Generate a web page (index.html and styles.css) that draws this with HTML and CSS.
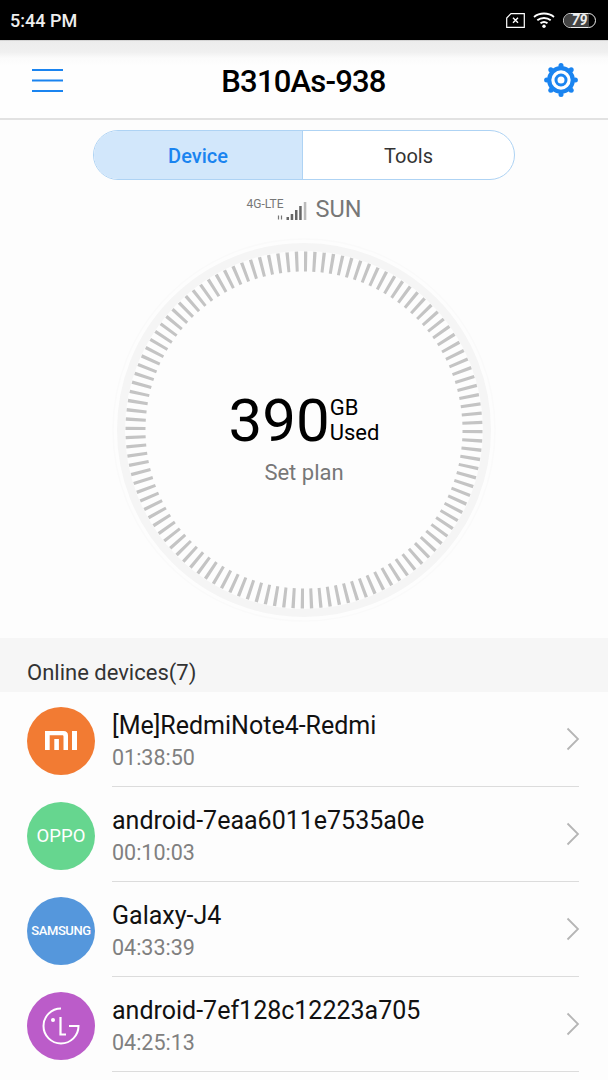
FILE: index.html
```html
<!DOCTYPE html>
<html lang="en">
<head>
    <meta charset="UTF-8">
    <meta name="viewport" content="width=device-width, initial-scale=1.0">
    <title>B310As-938</title>
    <link rel="stylesheet" href="styles.css">
</head>
<body>
    <div class="status-bar">
        <span class="clock">5:44 PM</span>
        <div class="status-icons">
            <svg class="sim-icon" width="19" height="15" viewBox="0 0 19 15">
                <path d="M5 .7H18.300V14.300H.7V5Z" fill="none" stroke="#fff" stroke-width="1.200"/>
                <path d="M7 4.800L12 9.800M12 4.800L7 9.800" stroke="#fff" stroke-width="1.400"/>
            </svg>
            <svg class="wifi-icon" width="22" height="16" viewBox="0 0 22 16">
                <path d="M1 5C6.500 .3 15.500 .3 21 5M4.300 8.300C8 5.200 14 5.200 17.700 8.300M7.500 11.300C9.500 9.800 12.500 9.800 14.500 11.300" fill="none" stroke="#fff" stroke-width="1.800"/>
                <circle cx="11" cy="14.300" r="1.700" fill="#fff"/>
            </svg>
            <div class="battery">
                <div class="battery-fill"></div>
                <span class="battery-num">79</span>
            </div>
        </div>
    </div>

    <header class="top-bar">
        <svg class="menu-icon" width="31" height="24" viewBox="0 0 31 24">
            <path d="M0 2H31M0 12.500H31M0 23H31" stroke="#1a84f0" stroke-width="2.200"/>
        </svg>
        <h1>B310As-938</h1>
        <svg class="gear-icon" width="34" height="34" viewBox="0 0 34 34">
            <circle cx="17" cy="17" r="11.800" fill="none" stroke="#1a84f0" stroke-width="4.200"/>
            <circle cx="17" cy="17" r="5" fill="none" stroke="#1a84f0" stroke-width="3"/>
            <g fill="#1a84f0">
                <circle cx="17" cy="2.600" r="2.500"/>
                <circle cx="17" cy="31.400" r="2.500"/>
                <circle cx="2.600" cy="17" r="2.500"/>
                <circle cx="31.400" cy="17" r="2.500"/>
                <circle cx="6.800" cy="6.800" r="2.500"/>
                <circle cx="27.200" cy="6.800" r="2.500"/>
                <circle cx="6.800" cy="27.200" r="2.500"/>
                <circle cx="27.200" cy="27.200" r="2.500"/>
            </g>
        </svg>
    </header>

    <div class="tabs">
        <div class="tab tab-active">Device</div>
        <div class="tab">Tools</div>
    </div>

    <div class="network">
        <div class="signal">
            <span class="net-type">4G-LTE</span>
            <svg class="signal-bars" width="37" height="18" viewBox="0 0 37 18">
                <path d="M8.500 17.500V13.500M11.500 13.500V17.500" stroke="#777" stroke-width="1.200"/>
                <rect x="16.500" y="15" width="2.500" height="3" fill="#666"/>
                <rect x="20.700" y="12" width="2.500" height="6" fill="#666"/>
                <rect x="25" y="8" width="2.500" height="10" fill="#666"/>
                <rect x="29.200" y="4" width="2.500" height="14" fill="#666"/>
                <rect x="33.800" y="0" width="2.500" height="18" fill="#bbb"/>
            </svg>
        </div>
        <span class="carrier">SUN</span>
    </div>

    <div class="gauge">
        <svg class="gauge-ring" width="400" height="400" viewBox="0 0 400 400">
            <circle cx="200" cy="200" r="191" fill="none" stroke="#fafafa" stroke-width="1.500"/>
            <circle cx="200" cy="200" r="183" fill="none" stroke="#f5f5f5" stroke-width="8"/>
            <circle cx="200" cy="200" r="168.500" fill="none" stroke="#c4c4c4" stroke-width="20" pathLength="120" stroke-dasharray="0.36 0.64"/>
        </svg>
        <div class="gauge-text">
            <div class="usage">
                <span class="usage-num">390</span>
                <span class="usage-unit">GB<br>Used</span>
            </div>
            <div class="set-plan">Set plan</div>
        </div>
    </div>

    <div class="list-title">Online devices(7)</div>

    <div class="device-list">
        <div class="device">
            <div class="avatar avatar-mi">
                <svg width="32" height="19" viewBox="0 0 32 19">
                    <path d="M0 0H18.500C21.500 0 23 1.500 23 4.500V19H18.500V5.500C18.500 4.800 18 4.300 17.500 4.300H4.700V19H0ZM9.300 8H13.900V19H9.300ZM27 0H32V19H27Z" fill="#fff"/>
                </svg>
            </div>
            <div class="device-info">
                <div class="device-name">[Me]RedmiNote4-Redmi</div>
                <div class="device-time">01:38:50</div>
            </div>
            <svg class="chevron" width="14" height="24" viewBox="0 0 14 24"><path d="M1.500 1.500L12 12L1.500 22.500" fill="none" stroke="#b5b5b5" stroke-width="1.800"/></svg>
        </div>
        <div class="device">
            <div class="avatar avatar-oppo"><span class="brand-oppo">OPPO</span></div>
            <div class="device-info">
                <div class="device-name">android-7eaa6011e7535a0e</div>
                <div class="device-time">00:10:03</div>
            </div>
            <svg class="chevron" width="14" height="24" viewBox="0 0 14 24"><path d="M1.500 1.500L12 12L1.500 22.500" fill="none" stroke="#b5b5b5" stroke-width="1.800"/></svg>
        </div>
        <div class="device">
            <div class="avatar avatar-samsung"><span class="brand-samsung">SAMSUNG</span></div>
            <div class="device-info">
                <div class="device-name">Galaxy-J4</div>
                <div class="device-time">04:33:39</div>
            </div>
            <svg class="chevron" width="14" height="24" viewBox="0 0 14 24"><path d="M1.500 1.500L12 12L1.500 22.500" fill="none" stroke="#b5b5b5" stroke-width="1.800"/></svg>
        </div>
        <div class="device">
            <div class="avatar avatar-lg">
                <svg width="38" height="38" viewBox="0 0 38 38">
                    <path d="M19 1.500A17.500 17.500 0 1 0 36.500 19H27" fill="none" stroke="#fff" stroke-width="2"/>
                    <path d="M18.500 10V27.500H24" fill="none" stroke="#fff" stroke-width="2.200"/>
                    <circle cx="11" cy="13" r="2" fill="#fff"/>
                </svg>
            </div>
            <div class="device-info">
                <div class="device-name">android-7ef128c12223a705</div>
                <div class="device-time">04:25:13</div>
            </div>
            <svg class="chevron" width="14" height="24" viewBox="0 0 14 24"><path d="M1.500 1.500L12 12L1.500 22.500" fill="none" stroke="#b5b5b5" stroke-width="1.800"/></svg>
        </div>
    </div>
</body>
</html>
```

FILE: styles.css
```css
html, body {
    margin: 0;
    padding: 0;
}
body {
    width: 608px;
    height: 1080px;
    overflow: hidden;
    background-color: #fdfdfd;
    font-family: Roboto, "Liberation Sans", sans-serif;
    color: #111;
}
.status-bar {
    height: 40px;
    background: #000;
    color: #eee;
    display: flex;
    justify-content: space-between;
    align-items: center;
    padding: 0 12px 0 10px;
}
.clock {
    font-size: 18px;
    font-weight: 500;
}
.status-icons {
    display: flex;
    align-items: center;
    gap: 8px;
}
.battery {
    position: relative;
    width: 31px;
    height: 13px;
    border: 1.5px solid #eee;
    border-radius: 9px;
    overflow: hidden;
}
.battery-fill {
    height: 100%;
    width: 80%;
    background: #444;
}
.battery-num {
    position: absolute;
    left: 0;
    right: 0;
    top: -2px;
    text-align: center;
    font-size: 14px;
    font-weight: 700;
    font-style: italic;
    color: #eee;
}
.top-bar {
    height: 80px;
    padding: 2px 30px 0 32px;
    box-sizing: border-box;
    display: flex;
    justify-content: space-between;
    align-items: center;
    background: linear-gradient(#bbb, #ececec 1px, #f0f0f0 12px, #fbfbfb 18px, #fefefe 26px);
    border-bottom: 2px solid #e2e2e2;
}
.top-bar h1 {
    margin: 3px 0 0;
    font-size: 31px;
    font-weight: 500;
    letter-spacing: -0.8px;
    color: #000;
}
.tabs {
    display: flex;
    width: 422px;
    height: 50px;
    margin: 10px auto 0;
    box-sizing: border-box;
    border: 1.5px solid #aed3f4;
    border-radius: 25px;
    overflow: hidden;
    background: #fff;
}
.tab {
    flex: 1;
    display: flex;
    align-items: center;
    justify-content: center;
    padding-top: 1px;
    font-size: 20px;
    color: #333;
}
.tab-active {
    flex: 0 0 209px;
    box-sizing: border-box;
    background: #d2e7fb;
    color: #1a84f0;
    font-weight: 500;
    border-right: 1.5px solid #aed3f4;
}
.network {
    display: flex;
    justify-content: center;
    align-items: flex-end;
    height: 28px;
    margin-top: 15px;
    gap: 9px;
}
.signal {
    position: relative;
    width: 60px;
    height: 26px;
}
.net-type {
    position: absolute;
    left: 0;
    top: 0;
    font-size: 12px;
    color: #777;
}
.signal-bars {
    position: absolute;
    right: 0;
    bottom: 3px;
}
.carrier {
    font-size: 23.500px;
    color: #777;
    line-height: 28px;
}
.gauge {
    position: relative;
    height: 410px;
    margin-top: 5px;
    display: flex;
    justify-content: center;
    align-items: center;
}
.gauge-ring {
    position: absolute;
    left: 104px;
    top: 2px;
}
.gauge-text {
    position: relative;
    margin-top: 5px;
    display: flex;
    flex-direction: column;
    align-items: center;
}
.usage {
    display: flex;
    align-items: center;
    color: #000;
}
.usage-num {
    font-size: 60px;
    line-height: 70px;
}
.usage-unit {
    font-size: 22px;
    line-height: 25px;
    margin-bottom: 2px;
}
.set-plan {
    font-size: 22px;
    color: #777;
    margin-top: 4px;
}
.list-title {
    height: 54px;
    padding-left: 27px;
    display: flex;
    align-items: flex-end;
    padding-bottom: 7px;
    box-sizing: border-box;
    background: #f6f6f6;
    font-size: 22px;
    color: #333;
}
.device {
    height: 95px;
    display: flex;
    align-items: center;
    padding: 0 29px 0 27px;
    position: relative;
}
.avatar {
    width: 68px;
    height: 68px;
    margin-top: 2px;
    border-radius: 50%;
    flex-shrink: 0;
    display: flex;
    align-items: center;
    justify-content: center;
    color: #fff;
}
.avatar-mi {
    background: #f27b33;
}
.avatar-oppo {
    background: #66d68f;
}
.avatar-samsung {
    background: #5597dc;
}
.avatar-lg {
    background: #bb5cc9;
}
.brand-oppo {
    font-size: 18.500px;
    letter-spacing: 0.1px;
}
.brand-samsung {
    font-size: 13px;
    font-weight: 500;
    letter-spacing: -0.4px;
}
.device-info {
    flex: 1;
    margin-left: 17px;
    padding-top: 4px;
    align-self: stretch;
    display: flex;
    flex-direction: column;
    justify-content: center;
    border-bottom: 1px solid #dcdcdc;
}
.device-name {
    font-size: 25px;
    color: #111;
    line-height: 33px;
}
.device-time {
    font-size: 21.500px;
    color: #808080;
    line-height: 32px;
}
.chevron {
    position: absolute;
    right: 28px;
    top: 35px;
}
```
